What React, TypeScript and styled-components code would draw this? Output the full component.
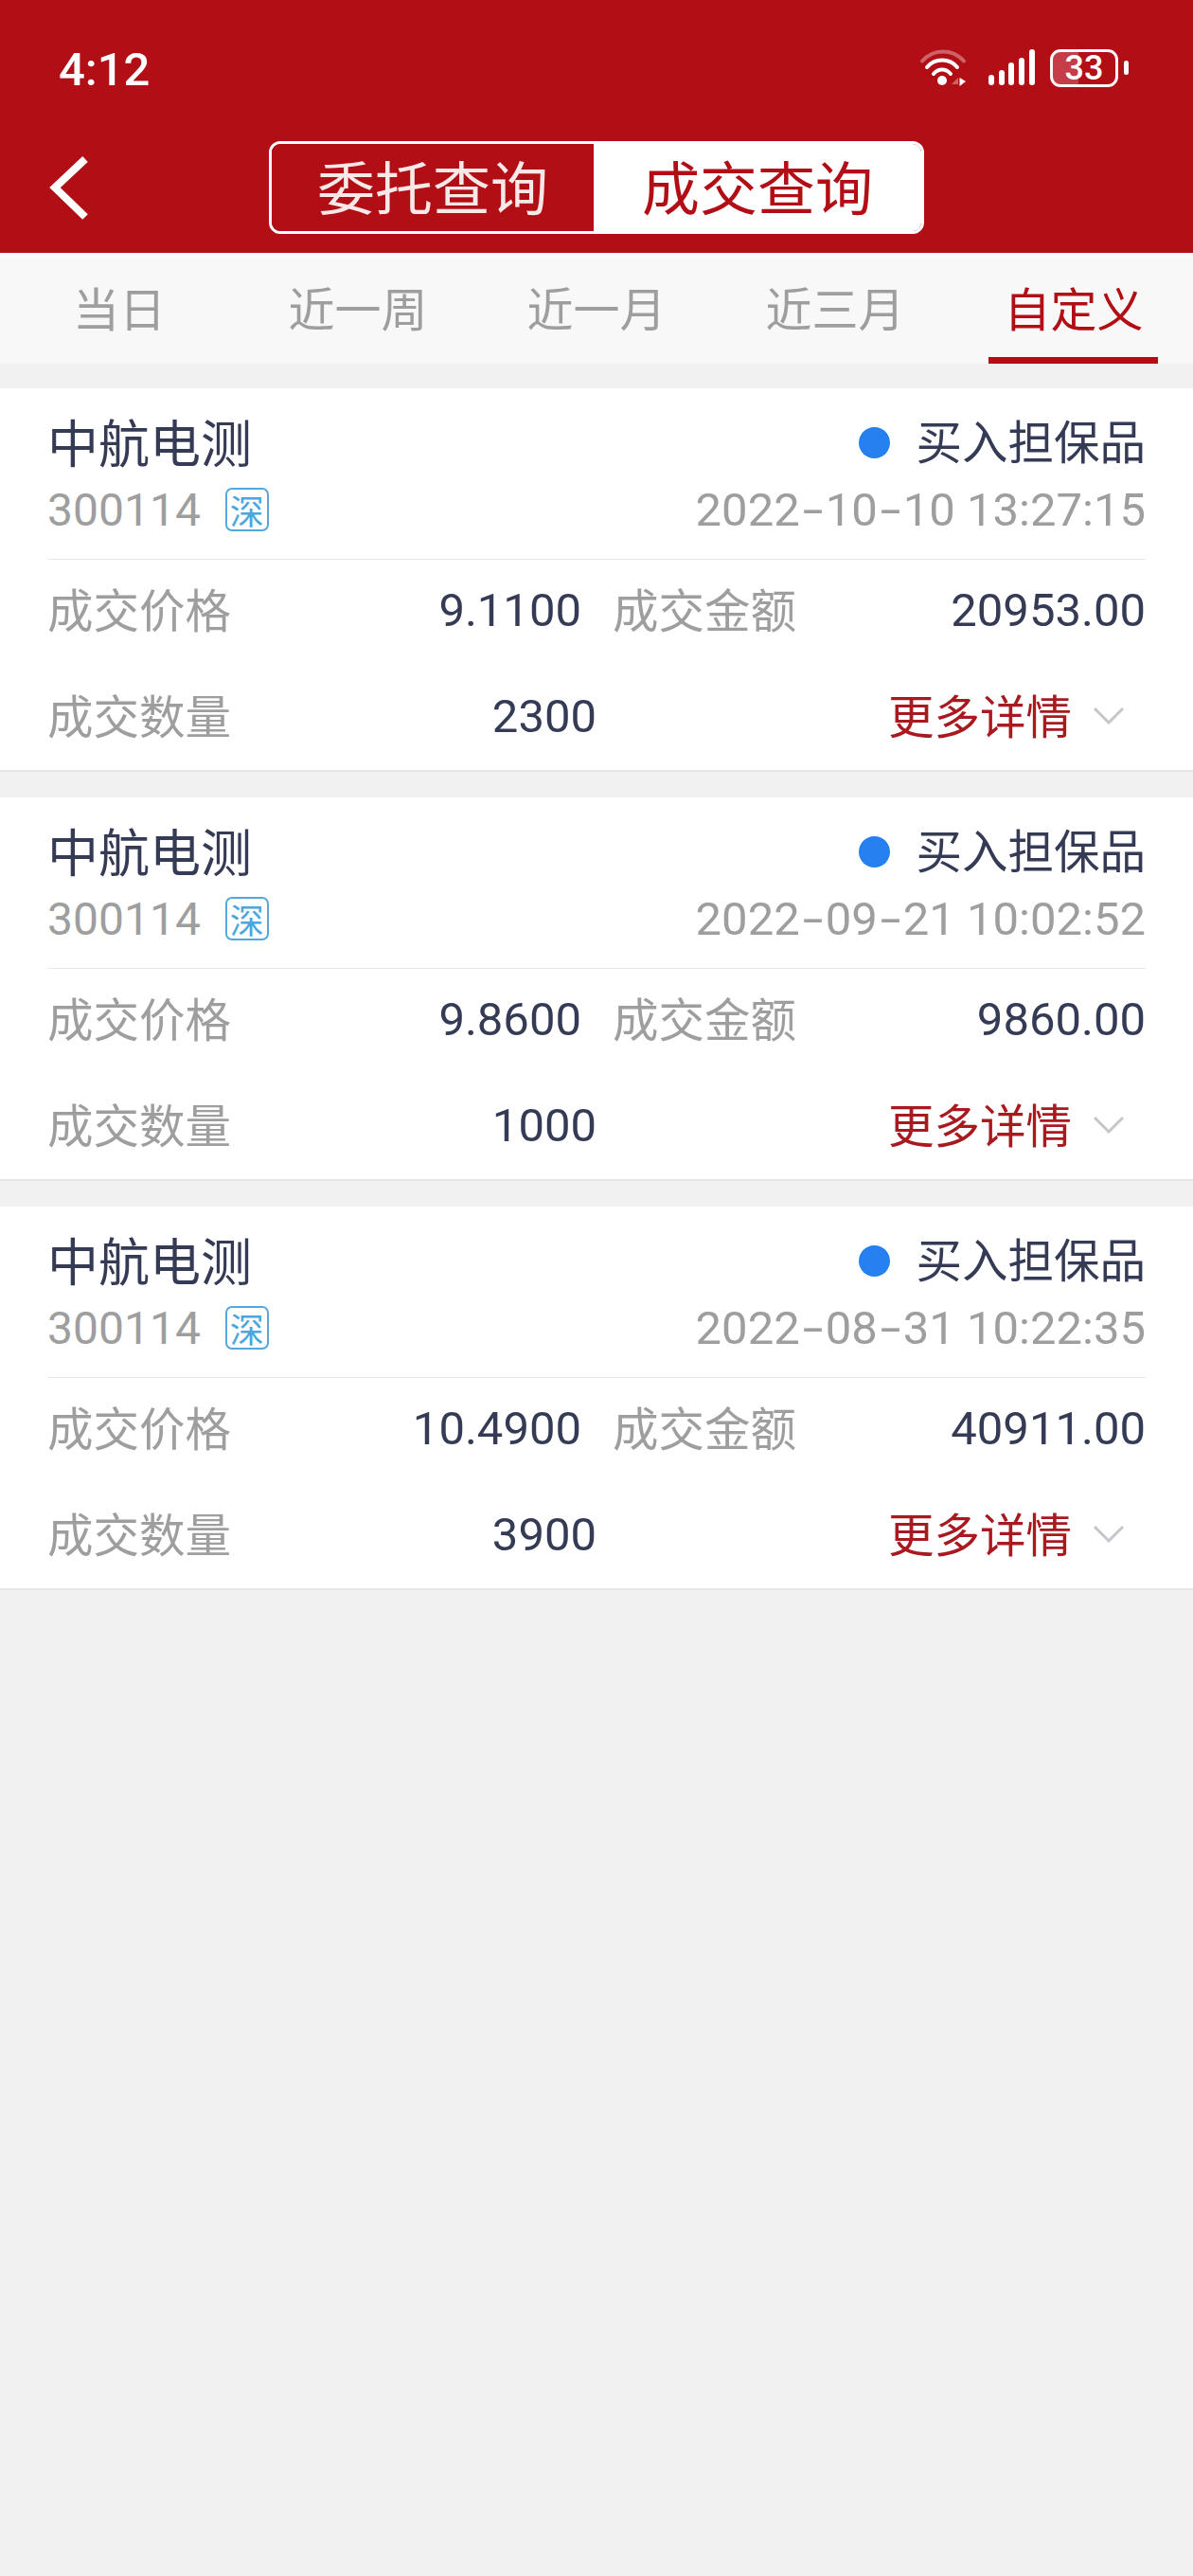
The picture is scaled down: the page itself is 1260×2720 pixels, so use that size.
import styled, { createGlobalStyle } from "styled-components";

const RED = "#b10f15";
const INK = "#353b55";
const GREY = "#9e9e9e";

const GlobalStyle = createGlobalStyle`
  html, body {
    margin: 0;
    padding: 0;
    background: #f1f1f1;
    font-family: Roboto, "Noto Sans CJK SC", sans-serif;
  }
  * {
    box-sizing: border-box;
  }
`;

const Page = styled.div`
  width: 1260px;
  min-height: 2720px;
  background: #f1f1f1;
`;

const Header = styled.header`
  height: 267px;
  background: ${RED};
`;

const StatusBar = styled.div`
  height: 149px;
  padding: 52px 68px 0 62px;
  display: flex;
  justify-content: space-between;
  align-items: flex-start;
`;

const Time = styled.span`
  margin-top: 2px;
  font-size: 49px;
  font-weight: 500;
  line-height: 40px;
  color: #fff;
`;

const StatusIcons = styled.div`
  display: flex;
  align-items: flex-start;
`;

const WifiIcon = styled.svg`
  width: 48px;
  height: 40px;
  margin-right: 24px;
`;

const SignalIcon = styled.svg`
  width: 49px;
  height: 40px;
  margin-right: 16px;
`;

const Battery = styled.div`
  width: 72px;
  height: 40px;
  border: 3px solid #fff;
  border-radius: 11px;
  background: linear-gradient(90deg, #c43d47 41%, transparent 41%);
  display: flex;
  align-items: center;
  justify-content: center;
  font-size: 36px;
  font-weight: 500;
  color: #fff;
`;

const BatteryNub = styled.span`
  width: 5px;
  height: 15px;
  margin: 12px 0 0 6px;
  border-radius: 3px;
  background: #fff;
`;

const NavBar = styled.div`
  display: grid;
  grid-template-columns: 1fr 692px 1fr;
  align-items: center;
  height: 98px;
`;

const BackIcon = styled.svg`
  width: 44px;
  height: 72px;
  margin-left: 51px;
`;

const Segmented = styled.div`
  display: flex;
  height: 98px;
  border: 3px solid #fff;
  border-radius: 12px;
  overflow: hidden;
`;

const Segment = styled.div<{ $active?: boolean }>`
  ${(p) => (p.$active ? "flex: 1;" : "width: 340px;")}
  display: flex;
  align-items: center;
  justify-content: center;
  padding-bottom: 6px;
  font-size: 61px;
  background: ${(p) => (p.$active ? "#fff" : RED)};
  color: ${(p) => (p.$active ? RED : "#f8e8e8")};
`;

const Tabs = styled.nav`
  display: grid;
  grid-template-columns: repeat(5, 1fr);
  height: 117px;
  background: #f8f8f8;
`;

const Tab = styled.div<{ $active?: boolean }>`
  position: relative;
  display: flex;
  align-items: center;
  justify-content: center;
  padding-bottom: 5px;
  font-size: 49px;
  color: ${(p) => (p.$active ? RED : GREY)};

  ${(p) =>
    p.$active &&
    `&::after {
      content: "";
      position: absolute;
      left: 36px;
      right: 37px;
      bottom: 0;
      height: 7px;
      background: ${RED};
    }`}
`;

const List = styled.div`
  display: flex;
  flex-direction: column;
  gap: 27px;
  margin-top: 26px;
`;

const Card = styled.section`
  height: 405px;
  padding: 25px 50px 0;
  background: #fff;
  border-bottom: 2px solid #e6e6e6;
`;

const TopRow = styled.div`
  display: flex;
  justify-content: space-between;
  align-items: center;
  height: 64px;
`;

const SubRow = styled(TopRow)`
  margin-top: 7px;
`;

const Name = styled.div`
  margin-bottom: 4px;
  font-size: 54px;
  color: ${INK};
`;

const Side = styled.div`
  display: flex;
  align-items: center;
  font-size: 48.5px;
  color: ${INK};
`;

const SideText = styled.span`
  margin-bottom: 6px;
`;

const Dot = styled.span`
  width: 33px;
  height: 33px;
  margin-right: 27px;
  border-radius: 50%;
  background: #2680f0;
`;

const Code = styled.div`
  display: flex;
  align-items: center;
  font-size: 48px;
  color: ${GREY};
`;

const MarketBadge = styled.span`
  display: flex;
  align-items: center;
  justify-content: center;
  width: 46px;
  height: 46px;
  margin-left: 26px;
  border: 2px solid #54a9dc;
  border-radius: 7px;
  font-size: 36px;
  color: #4aa6dd;
`;

const DateText = styled.div`
  font-size: 49px;
  color: ${GREY};
  white-space: nowrap;
`;

const Dash = styled.span`
  display: inline-block;
  width: 27px;
  text-align: center;
  transform: scaleX(1.6);
`;

const Divider = styled.div`
  height: 1px;
  margin-top: 20px;
  background: #e8e8e8;
`;

const StatRow = styled.div<{ $tall?: boolean }>`
  display: flex;
  justify-content: space-between;
  align-items: center;
  height: 106px;
  margin-top: ${(p) => (p.$tall ? "6px" : "0")};
`;

const Stat = styled.div<{ $width: number }>`
  display: flex;
  justify-content: space-between;
  align-items: center;
  width: ${(p) => p.$width}px;
`;

const Label = styled.span`
  margin-bottom: 5px;
  font-size: 48.5px;
  color: ${GREY};
`;

const Value = styled.span`
  font-size: 49px;
  color: ${INK};
`;

const MoreLink = styled.div`
  display: flex;
  align-items: center;
  margin-right: 22px;
  font-size: 48.5px;
  color: #a81a1f;
`;

const MoreText = styled.span`
  margin-bottom: 5px;
`;

const Chevron = styled.svg`
  width: 34px;
  height: 20px;
  margin-left: 22px;
`;

const TRADES = [
  { date: "2022-10-10 13:27:15", price: "9.1100", amount: "20953.00", qty: "2300" },
  { date: "2022-09-21 10:02:52", price: "9.8600", amount: "9860.00", qty: "1000" },
  { date: "2022-08-31 10:22:35", price: "10.4900", amount: "40911.00", qty: "3900" },
];

const PERIODS = ["当日", "近一周", "近一月", "近三月", "自定义"];

function TradeDate({ value }: { value: string }) {
  return (
    <DateText>
      {value.split(/(-)/).map((part, i) => (part === "-" ? <Dash key={i}>-</Dash> : part))}
    </DateText>
  );
}

export default function App() {
  return (
    <Page>
      <GlobalStyle />
      <Header>
        <StatusBar>
          <Time>4:12</Time>
          <StatusIcons>
            <WifiIcon viewBox="0 0 48 40" fill="none" stroke="#fff" strokeLinecap="round" strokeWidth="4">
              <path d="M2 12.5C14 -1 34 -1 46 12.5" strokeOpacity="0.35" />
              <path d="M7 19C15 9 31 9 39 19" />
              <path d="M14 26C19 20 27 20 32 26" />
              <circle cx="23" cy="33" r="5" fill="#fff" stroke="none" />
              <path d="M33 37L40 37L40 30Z" fill="#fff" fillOpacity="0.35" stroke="none" />
              <path d="M41.5 30L48 34L41.5 39Z" fill="#fff" stroke="none" />
            </WifiIcon>
            <SignalIcon viewBox="0 0 49 40" fill="#fff">
              <rect x="0" y="27" width="6" height="11" rx="3" />
              <rect x="11" y="22" width="6" height="16" rx="3" />
              <rect x="21" y="14" width="6" height="24" rx="3" />
              <rect x="32" y="9" width="6" height="29" rx="3" />
              <rect x="43" y="0" width="6" height="38" rx="3" />
            </SignalIcon>
            <Battery>33</Battery>
            <BatteryNub />
          </StatusIcons>
        </StatusBar>
        <NavBar>
          <BackIcon viewBox="0 0 44 72" fill="none" stroke="#fff" strokeWidth="8">
            <path d="M39 6L7 36L39 67" />
          </BackIcon>
          <Segmented>
            <Segment>委托查询</Segment>
            <Segment $active>成交查询</Segment>
          </Segmented>
        </NavBar>
      </Header>

      <Tabs>
        {PERIODS.map((p) => (
          <Tab key={p} $active={p === "自定义"}>
            {p}
          </Tab>
        ))}
      </Tabs>

      <List>
        {TRADES.map((t) => (
          <Card key={t.date}>
            <TopRow>
              <Name>中航电测</Name>
              <Side>
                <Dot />
                <SideText>买入担保品</SideText>
              </Side>
            </TopRow>
            <SubRow>
              <Code>
                300114
                <MarketBadge>深</MarketBadge>
              </Code>
              <TradeDate value={t.date} />
            </SubRow>
            <Divider />
            <StatRow>
              <Stat $width={564}>
                <Label>成交价格</Label>
                <Value>{t.price}</Value>
              </Stat>
              <Stat $width={563}>
                <Label>成交金额</Label>
                <Value>{t.amount}</Value>
              </Stat>
            </StatRow>
            <StatRow $tall>
              <Stat $width={580}>
                <Label>成交数量</Label>
                <Value>{t.qty}</Value>
              </Stat>
              <MoreLink>
                <MoreText>更多详情</MoreText>
                <Chevron viewBox="0 0 34 20" fill="none" stroke="#c4c6cc" strokeWidth="3">
                  <path d="M2 2L17 17L32 2" />
                </Chevron>
              </MoreLink>
            </StatRow>
          </Card>
        ))}
      </List>
    </Page>
  );
}
